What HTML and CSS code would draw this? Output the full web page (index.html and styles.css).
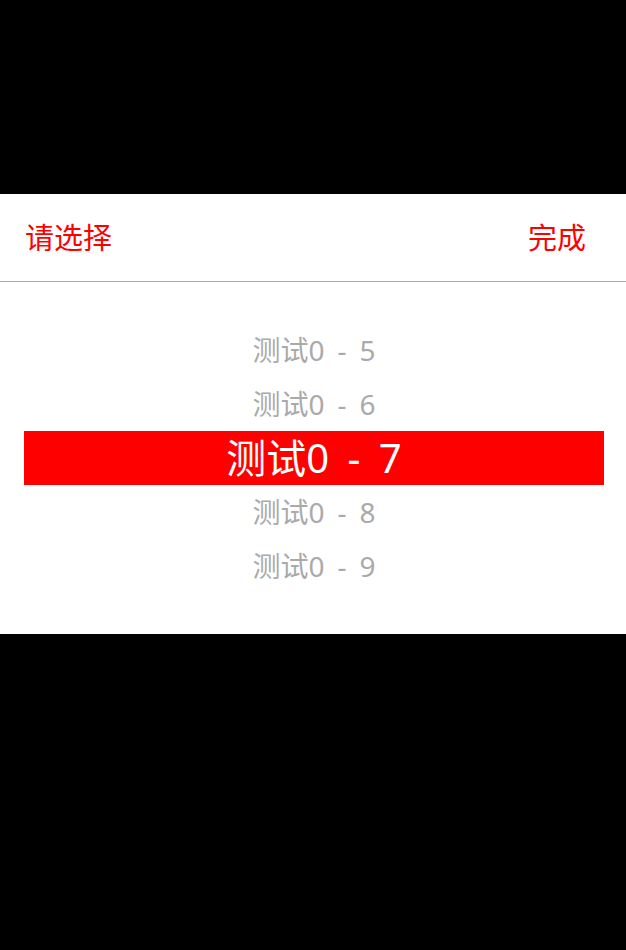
FILE: index.html
```html
<!DOCTYPE html>
<html lang="zh">
<head>
<meta charset="utf-8">
<link rel="stylesheet" href="styles.css">
</head>
<body>
<div class="screen">
  <div class="sheet">
    <div class="toolbar">
      <span class="btn">请选择</span>
      <span class="btn">完成</span>
    </div>
    <div class="picker">
      <div class="row">测试0 - 5</div>
      <div class="row">测试0 - 6</div>
      <div class="row selected">测试0 - 7</div>
      <div class="row">测试0 - 8</div>
      <div class="row">测试0 - 9</div>
    </div>
  </div>
</div>
</body>
</html>
```
FILE: styles.css
```css
html, body {
  margin: 0;
  padding: 0;
  background: #000;
}
.screen {
  width: 626px;
  height: 950px;
  display: flex;
  flex-direction: column;
  padding-top: 194px;
  box-sizing: border-box;
  font-family: "Noto Sans CJK SC", sans-serif;
}
.sheet {
  background: #fff;
  height: 440px;
  display: flex;
  flex-direction: column;
}
.toolbar {
  height: 88px;
  border-bottom: 1px solid #aaaaaa;
  display: flex;
  justify-content: space-between;
  align-items: center;
  padding: 0 40px 3px 25px;
  box-sizing: border-box;
}
.btn {
  color: #ff0000;
  font-size: 29px;
  line-height: 1;
}
.picker {
  flex: 1;
  display: flex;
  flex-direction: column;
  justify-content: center;
  padding: 0 22px 0 24px;
}
.row {
  height: 54px;
  display: flex;
  align-items: center;
  justify-content: center;
  color: #aaaaaa;
  font-family: "Noto Sans", "Noto Sans CJK SC", sans-serif;
  font-size: 28px;
  line-height: 1;
  word-spacing: 0.2em;
}
.row.selected {
  background: #ff0000;
  color: #fff;
  font-size: 40px;
}
```
